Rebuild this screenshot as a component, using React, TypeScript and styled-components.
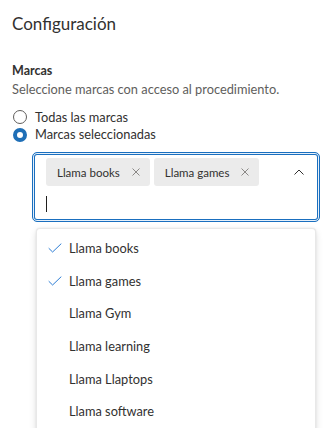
import { createGlobalStyle } from 'styled-components';
import styled from 'styled-components';

const GlobalStyle = createGlobalStyle`
  body {
    margin: 0;
    background: #ffffff;
    font-family: Lato, 'Noto Sans', Arial, sans-serif;
    color: #323130;
  }
`;

const Page = styled.div`
  padding: 12px 12px 0 12px;
  height: 428px;
  box-sizing: border-box;
  overflow: hidden;
`;

const Title = styled.h1`
  margin: 0;
  font-size: 17px;
  font-weight: 400;
  line-height: 24px;
`;

const Section = styled.div`
  margin-top: 26px;
`;

const Label = styled.div`
  font-size: 12.5px;
  font-weight: 700;
  line-height: 18px;
`;

const Description = styled.div`
  font-size: 12.8px;
  line-height: 18px;
  color: #605e5c;
`;

const RadioGroup = styled.div`
  margin-top: 10.5px;
  display: flex;
  flex-direction: column;
`;

const RadioRow = styled.label`
  display: flex;
  align-items: center;
  gap: 8px;
  height: 17.5px;
  line-height: 17px;
  font-size: 12.8px;
`;

const RadioCircle = styled.span<{ checked?: boolean }>`
  flex: none;
  width: 14px;
  height: 14px;
  border-radius: 50%;
  box-sizing: border-box;
  margin-left: 1px;
  border: ${(p) => (p.checked ? '4.5px solid #1f6fb7' : '1px solid #605e5c')};
  background: #ffffff;
`;

const ComboWrap = styled.div`
  margin: 8.5px 0 0 20px;
  width: 288px;
`;

const Combo = styled.div`
  height: 70px;
  box-sizing: border-box;
  border: 1px solid #1a6fbf;
  border-radius: 5px;
  box-shadow: inset 0 0 0 1px #e6f0fa, inset 0 0 0 2px #1a6fbf;
  padding: 5px 15px 0 13px;
  display: flex;
  flex-direction: column;
`;

const ChipLine = styled.div`
  display: flex;
  align-items: center;
  gap: 4px;
`;

const Chip = styled.div`
  height: 28px;
  border-radius: 3px;
  background: #ebebeb;
  display: flex;
  align-items: center;
  padding: 0 10px 0 11px;
  gap: 12px;
  font-size: 11.5px;
  color: #323130;
`;

const Chevron = styled.span`
  margin-left: auto;
  display: flex;
  align-items: center;
`;

const Cursor = styled.div`
  flex: none;
  margin-top: 10px;
  width: 1px;
  height: 16px;
  background: #201f1e;
`;

const Menu = styled.div`
  margin: 6px 0 0 4px;
  width: 280px;
  height: 220px;
  box-sizing: border-box;
  border: 1px solid #e8e8e8;
  border-bottom: none;
  border-radius: 4px 4px 0 0;
  box-shadow: 0 3.2px 7.2px rgba(0, 0, 0, 0.13), 0 0.6px 1.8px rgba(0, 0, 0, 0.1);
  padding-top: 3px;
  background: #ffffff;
`;

const Option = styled.div`
  height: 32.6px;
  display: flex;
  align-items: center;
  font-size: 12.8px;
  color: #323130;
`;

const CheckSlot = styled.span`
  width: 32px;
  display: flex;
  justify-content: flex-end;
  padding-right: 7px;
  box-sizing: border-box;
`;

const CheckIcon = () => (
  <svg width="14" height="10" viewBox="0 0 14 10">
    <path d="M0.7 5.2 L4.6 9 L13.3 0.6" fill="none" stroke="#2b7cd3" strokeWidth="1" />
  </svg>
);

const CloseIcon = () => (
  <svg width="8" height="8" viewBox="0 0 8 8">
    <path d="M0.5 0.5 L7.5 7.5 M7.5 0.5 L0.5 7.5" stroke="#8a8886" strokeWidth="1" />
  </svg>
);

const ChevronUp = () => (
  <svg width="10" height="6" viewBox="0 0 10 6">
    <path d="M0.5 5.5 L5 1 L9.5 5.5" fill="none" stroke="#323130" strokeWidth="1" />
  </svg>
);

const selected = ['Llama books', 'Llama games'];
const brands = [
  'Llama books',
  'Llama games',
  'Llama Gym',
  'Llama learning',
  'Llama Llaptops',
  'Llama software',
];

export default function App() {
  return (
    <>
      <GlobalStyle />
      <Page>
        <Title>Configuración</Title>
        <Section>
          <Label>Marcas</Label>
          <Description>Seleccione marcas con acceso al procedimiento.</Description>
          <RadioGroup>
            <RadioRow>
              <RadioCircle />
              Todas las marcas
            </RadioRow>
            <RadioRow>
              <RadioCircle checked />
              Marcas seleccionadas
            </RadioRow>
          </RadioGroup>
          <ComboWrap>
            <Combo>
              <ChipLine>
                {selected.map((s) => (
                  <Chip key={s}>
                    {s}
                    <CloseIcon />
                  </Chip>
                ))}
                <Chevron>
                  <ChevronUp />
                </Chevron>
              </ChipLine>
              <Cursor />
            </Combo>
            <Menu>
              {brands.map((b) => (
                <Option key={b}>
                  <CheckSlot>{selected.includes(b) && <CheckIcon />}</CheckSlot>
                  {b}
                </Option>
              ))}
            </Menu>
          </ComboWrap>
        </Section>
      </Page>
    </>
  );
}
